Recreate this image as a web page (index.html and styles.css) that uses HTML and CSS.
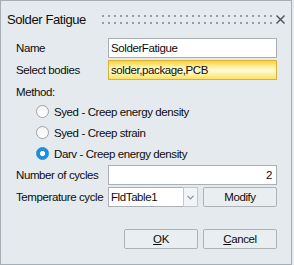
FILE: index.html
```html
<!DOCTYPE html>
<html lang="en">
<head>
  <meta charset="UTF-8">
  <title>Solder Fatigue</title>
  <link rel="stylesheet" href="styles.css">
</head>
<body>
  <div class="dialog">
    <div class="titlebar">
      <span class="title">Solder Fatigue</span>
      <span class="grip"></span>
      <svg class="close" width="9" height="9" viewBox="0 0 9 9">
        <path d="M0.5 0.5 L8.5 8.5 M8.5 0.5 L0.5 8.5" stroke="#4a5056" stroke-width="1.4" fill="none"/>
      </svg>
    </div>
    <div class="form">
      <div class="row">
        <span class="label">Name</span>
        <div class="field">SolderFatigue</div>
      </div>
      <div class="row">
        <span class="label">Select bodies</span>
        <div class="field picked">solder,package,PCB</div>
      </div>
      <div class="row method">
        <span class="label">Method:</span>
      </div>
      <div class="radio-row"><span class="radio"></span>Syed - Creep energy density</div>
      <div class="radio-row"><span class="radio"></span>Syed - Creep strain</div>
      <div class="radio-row"><span class="radio checked"></span>Darv - Creep energy density</div>
      <div class="row cycles">
        <span class="label">Number of cycles</span>
        <div class="field number">2</div>
      </div>
      <div class="row">
        <span class="label">Temperature cycle</span>
        <div class="select">
          <div class="select-text">FldTable1</div>
          <div class="select-arrow">
            <svg width="7" height="5" viewBox="0 0 7 5"><path d="M0.5 0.8 L3.5 3.8 L6.5 0.8" stroke="#8a9096" stroke-width="1.2" fill="none"/></svg>
          </div>
        </div>
        <div class="button modify">Modify</div>
      </div>
      <div class="actions">
        <div class="button"><u>O</u>K</div>
        <div class="button"><u>C</u>ancel</div>
      </div>
    </div>
  </div>
</body>
</html>
```

FILE: styles.css
```css
* { box-sizing: border-box; margin: 0; padding: 0; }
body {
  font-family: "Liberation Sans", Arial, sans-serif;
  font-size: 11.5px;
  letter-spacing: -0.4px;
  color: #0d0d0d;
  background-color: #e4eaee;
}
.dialog {
  width: 292px;
  height: 265px;
  border: 1px solid #a6aeb6;
  background-color: #e4eaee;
}
.titlebar {
  display: flex;
  align-items: center;
  height: 37px;
  padding-left: 6px;
}
.title { font-size: 13px; }
.grip {
  flex: 1;
  height: 9px;
  margin-left: 16px;
  background-image: conic-gradient(at 2px 2px, transparent 75%, #959ca3 0);
  background-size: 6px 7px;
}
.close { margin: 0 6px 0 4px; }
.form { padding-left: 15px; }
.row {
  display: flex;
  align-items: center;
  height: 20px;
  margin-bottom: 2px;
}
.label { width: 92px; }
.field {
  width: 169px;
  height: 20px;
  line-height: 18px;
  padding: 0 2px;
  border: 1px solid #abb0b5;
  background-color: #fff;
  white-space: nowrap;
}
.field.picked {
  border-color: #d6b13c;
  background: linear-gradient(#ffd22e, #fff3b0 35%, #fffad6 55%, #ffe25e);
}
.field.number { text-align: right; padding-right: 4px; }
.row.method { height: 19px; margin-bottom: 0; }
.radio-row {
  display: flex;
  align-items: center;
  height: 21px;
  padding-left: 20px;
}
.radio {
  width: 13px;
  height: 13px;
  margin-right: 5px;
  border: 1px solid #9da3a8;
  border-radius: 50%;
  background: linear-gradient(#f4f4f4, #fff);
}
.radio.checked {
  border-color: #1b8fe0;
  background: radial-gradient(circle, #fff 2.4px, #1b8fe0 2.9px);
}
.row.cycles { margin-top: 1px; }
.select { display: flex; }
.select-text {
  width: 76px;
  height: 20px;
  line-height: 18px;
  padding: 0 2px;
  border: 1px solid #abb0b5;
  background-color: #fff;
}
.select-arrow {
  display: flex;
  align-items: center;
  justify-content: center;
  width: 15px;
  height: 20px;
  margin-left: -1px;
  border: 1px solid #c2c7cc;
  background-color: #f2f5f7;
}
.button {
  width: 74px;
  height: 20px;
  line-height: 18px;
  text-align: center;
  border: 1px solid #adb2b7;
  border-radius: 2px;
  background-color: #e9eef1;
}
.button.modify { margin-left: 5px; }
.actions {
  display: flex;
  justify-content: flex-end;
  gap: 5px;
  width: 261px;
  margin-top: 22px;
}
```
